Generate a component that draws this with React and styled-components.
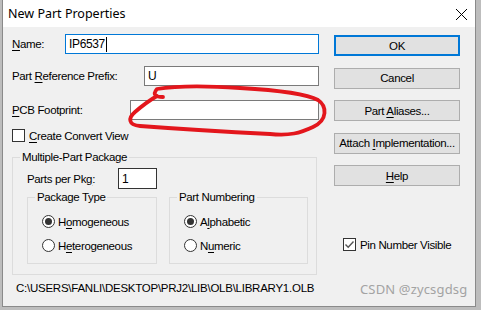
import React from "react";
import styled, { createGlobalStyle } from "styled-components";

const GlobalStyle = createGlobalStyle`
  html, body {
    margin: 0;
    padding: 0;
    background: #bdbdbd;
  }
  body {
    width: 481px;
    height: 310px;
    overflow: hidden;
  }
`;

const dialogFont = `"Liberation Sans", Arial, sans-serif`;

const Window = styled.div`
  position: relative;
  box-sizing: border-box;
  margin-left: 2px;
  width: 474px;
  height: 307px;
  background: #f0f0f0;
  border: 1px solid #8a8a8a;
  border-top: none;
  display: flex;
  flex-direction: column;
  font-family: ${dialogFont};
  font-size: 11.5px;
  letter-spacing: -0.35px;
  color: #000;
`;

const TitleBar = styled.div`
  height: 27px;
  background: #fff;
  display: flex;
  align-items: center;
  justify-content: space-between;
  padding: 0 7px 0 5px;
  letter-spacing: 0;
`;

const Title = styled.span`
  font-family: "Noto Sans", "Open Sans", sans-serif;
  font-size: 12.5px;
  color: #000;
  margin-top: -1px;
`;

const CloseBtn = styled.span`
  display: flex;
  width: 13px;
  height: 13px;
  margin-top: 1px;
`;

const Body = styled.div`
  flex: 1;
  display: flex;
`;

const LeftCol = styled.div`
  width: 307px;
  padding: 7px 0 0 9px;
  display: flex;
  flex-direction: column;
`;

const RightCol = styled.div`
  width: 126px;
  margin-left: 15px;
  padding-top: 8px;
  display: flex;
  flex-direction: column;
  gap: 11.5px;
`;

const FieldRow = styled.div`
  display: flex;
  align-items: center;
  justify-content: space-between;
  height: 20px;
  margin-top: ${({ $top }) => $top || 0}px;
`;

const Label = styled.span`
  white-space: nowrap;
  line-height: 14px;
`;

const Mn = styled.span`
  text-decoration: underline;
  text-underline-offset: 2px;
`;

const TextBox = styled.div`
  box-sizing: border-box;
  width: ${({ $w }) => $w}px;
  height: ${({ $h }) => $h || 20}px;
  background: #fff;
  border: 1px solid ${({ $focus, $dark }) => ($focus ? "#0078d7" : $dark ? "#333" : "#7a7a7a")};
  display: flex;
  align-items: center;
  padding-left: 3px;
  line-height: 14px;
  font-size: 12px;
`;

const Caret = styled.span`
  display: inline-block;
  width: 1px;
  height: 15px;
  background: #000;
  margin-left: 1px;
`;

const CheckRow = styled.label`
  display: flex;
  align-items: center;
  gap: 4px;
  height: 13px;
  margin-top: ${({ $top }) => $top || 0}px;
  margin-left: ${({ $left }) => $left || 0}px;
  white-space: nowrap;
`;

const Box = styled.span`
  box-sizing: border-box;
  width: 13px;
  height: 13px;
  border: 1px solid #333;
  background: #fff;
  display: flex;
  align-items: center;
  justify-content: center;
`;

const Group = styled.fieldset`
  box-sizing: border-box;
  margin: ${({ $top }) => $top || 0}px 0 0 0;
  padding: 0;
  width: ${({ $w }) => $w}px;
  height: ${({ $h }) => $h}px;
  border: 1px solid #dcdcdc;
  min-width: 0;
`;

const Legend = styled.legend`
  padding: 0 2px;
  margin-left: 7px;
  line-height: 14px;
  white-space: nowrap;
`;

const PkgRow = styled.div`
  display: flex;
  align-items: center;
  height: 21px;
  margin: 4px 0 0 14px;
  gap: 23px;
`;

const GroupPair = styled.div`
  display: flex;
  gap: 12px;
  margin: 1px 0 0 14px;
`;

const RadioList = styled.div`
  display: flex;
  flex-direction: column;
  gap: 11px;
  margin: 11px 0 0 14px;
`;

const RadioRow = styled.label`
  display: flex;
  align-items: center;
  gap: 3px;
  height: 13px;
  white-space: nowrap;
`;

const Circle = styled.span`
  box-sizing: border-box;
  width: 13px;
  height: 13px;
  border-radius: 50%;
  border: 1px solid #333;
  background: #fff;
  display: flex;
  align-items: center;
  justify-content: center;
  &::after {
    content: "";
    display: ${({ $on }) => ($on ? "block" : "none")};
    width: 7px;
    height: 7px;
    border-radius: 50%;
    background: #333;
  }
`;

const PathText = styled.div`
  margin: 6px 0 0 4px;
  line-height: 14px;
  white-space: nowrap;
  letter-spacing: -0.25px;
`;

const Button = styled.div`
  box-sizing: border-box;
  height: 21px;
  background: #e1e1e1;
  border: ${({ $default }) => ($default ? "2px solid #0078d7" : "1px solid #adadad")};
  display: flex;
  align-items: center;
  justify-content: center;
  white-space: nowrap;
`;

const Watermark = styled.div`
  margin: 29px 0 0 26px;
  font-family: "Noto Sans", "Open Sans", sans-serif;
  font-size: 13px;
  letter-spacing: 0.15px;
  color: #a3a3a3;
  white-space: nowrap;
`;

const Scribble = styled.svg`
  position: absolute;
  left: -3px;
  top: 0;
  pointer-events: none;
`;

const Radio = ({ on, children }) => (
  <RadioRow>
    <Circle $on={on} />
    <span>{children}</span>
  </RadioRow>
);

const Check = ({ on, children, top, left }) => (
  <CheckRow $top={top} $left={left}>
    <Box>
      {on && (
        <svg width="11" height="11" viewBox="0 0 11 11">
          <path d="M1.5 5.5 L4.2 8.2 L9.5 2.5" fill="none" stroke="#555" strokeWidth="1.4" />
        </svg>
      )}
    </Box>
    <span>{children}</span>
  </CheckRow>
);

const buttons = [
  { id: 1, text: <>OK</>, def: true },
  { id: 2, text: <>Cancel</> },
  { id: 3, text: <>Part <Mn>A</Mn>liases...</> },
  { id: 4, text: <>Attach <Mn>I</Mn>mplementation...</> },
  { id: 5, text: <><Mn>H</Mn>elp</> },
];

export default function App() {
  return (
    <>
      <GlobalStyle />
      <Window>
        <TitleBar>
          <Title>New Part Properties</Title>
          <CloseBtn>
            <svg width="13" height="13" viewBox="0 0 13 13">
              <path d="M1 1 L12 12 M12 1 L1 12" stroke="#000" strokeWidth="1" />
            </svg>
          </CloseBtn>
        </TitleBar>
        <Body>
          <LeftCol>
            <FieldRow>
              <Label><Mn>N</Mn>ame:</Label>
              <TextBox $w={254} $focus>IP6537<Caret /></TextBox>
            </FieldRow>
            <FieldRow $top={12}>
              <Label>Part <Mn>R</Mn>eference Prefix:</Label>
              <TextBox $w={175}>U</TextBox>
            </FieldRow>
            <FieldRow $top={14}>
              <Label><Mn>P</Mn>CB Footprint:</Label>
              <TextBox $w={189} />
            </FieldRow>
            <Check top={9}><Mn>C</Mn>reate Convert View</Check>
            <Group $top={8} $w={305} $h={125}>
              <Legend>Multiple-Part Package</Legend>
              <PkgRow>
                <Label>Parts per Pk<Mn>g</Mn>:</Label>
                <TextBox $w={39} $h={21} $dark>1</TextBox>
              </PkgRow>
              <GroupPair>
                <Group $w={130} $h={74}>
                  <Legend>Package Type</Legend>
                  <RadioList>
                    <Radio on>H<Mn>o</Mn>mogeneous</Radio>
                    <Radio>H<Mn>e</Mn>terogeneous</Radio>
                  </RadioList>
                </Group>
                <Group $w={139} $h={74}>
                  <Legend>Part Numbering</Legend>
                  <RadioList>
                    <Radio on>A<Mn>l</Mn>phabetic</Radio>
                    <Radio>N<Mn>u</Mn>meric</Radio>
                  </RadioList>
                </Group>
              </GroupPair>
            </Group>
            <PathText>C:\USERS\FANLI\DESKTOP\PRJ2\LIB\OLB\LIBRARY1.OLB</PathText>
          </LeftCol>
          <RightCol>
            {buttons.map(b => (
              <Button key={b.id} $default={b.def}><span>{b.text}</span></Button>
            ))}
            <div>
              <Check on top={40.5} left={9}>Pin Number Visible</Check>
              <Watermark>CSDN @zycsgdsg</Watermark>
            </div>
          </RightCol>
        </Body>
        <Scribble width="481" height="310" viewBox="0 0 481 310">
          <path
            d="M163 97 C156 97, 152 95, 157 89 C175 86, 210 86, 240 88 C275 90, 305 93, 318 100 C327 106, 328 120, 313 127 C300 133, 290 136, 270 134 C230 132, 180 129, 140 126 C128 125, 128 118, 135 112 C142 106, 150 100, 157 96"
            fill="none"
            stroke="#e3161c"
            strokeWidth="3.8"
            strokeLinecap="round"
            strokeLinejoin="round"
          />
        </Scribble>
      </Window>
    </>
  );
}
